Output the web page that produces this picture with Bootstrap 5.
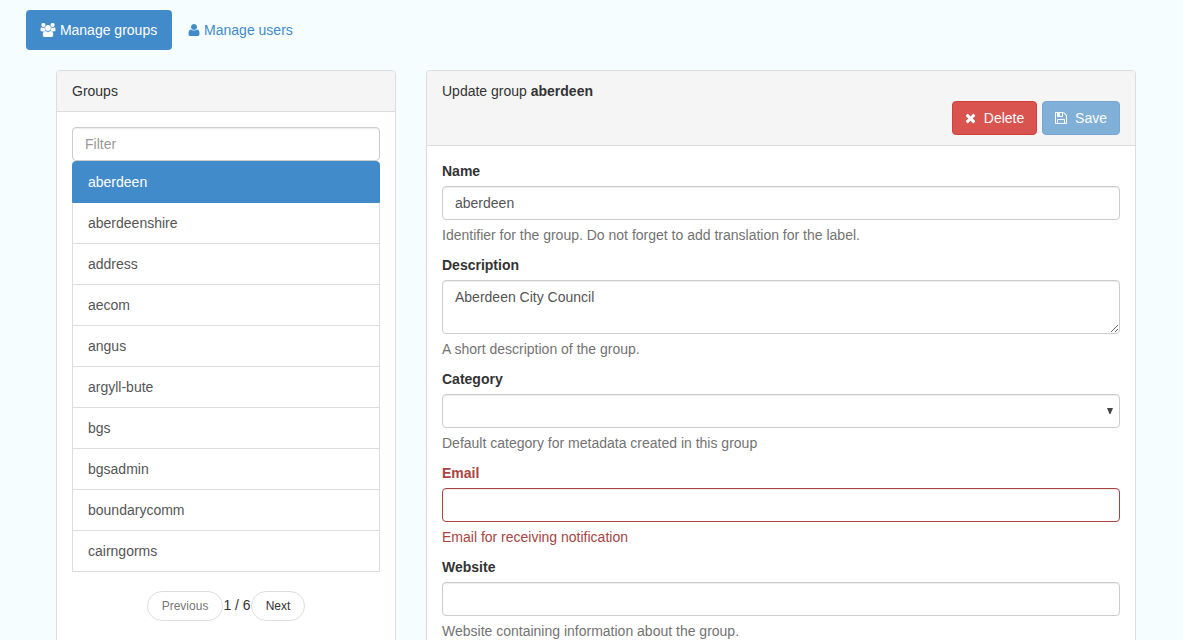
<!DOCTYPE html>
<html lang="en">
<head>
<meta charset="utf-8">
<meta name="viewport" content="width=device-width, initial-scale=1">
<title>Manage groups</title>
<link href="https://cdn.jsdelivr.net/npm/bootstrap@5.3.0/dist/css/bootstrap.min.css" rel="stylesheet">
<style>
  body { font: 14px/20px "Liberation Sans", Arial, sans-serif; color: #333; background: #f5fdff; }
  a { color: #428bca; }
  .admin-page { padding: 10px 32px 0 26px; }
  .nav-pills { gap: 2px; --bs-nav-pills-link-active-bg: #428bca; --bs-nav-pills-border-radius: 4px; --bs-nav-link-color: #428bca; margin-bottom: 20px; }
  .nav-pills .nav-link { padding: 10px 15px 10px 14px; font-size: 14px; border: 0; }
  .icon { height: 14px; fill: currentColor; vertical-align: -2px; }
  .panels { --bs-gutter-x: 30px; margin: 0 0 0 15px; }
  .card { --bs-card-border-color: #ddd; --bs-card-border-radius: 4px; --bs-card-inner-border-radius: 3px; --bs-card-color: #333; box-shadow: 0 1px 1px rgba(0,0,0,.05); }
  .card-header { padding: 10px 15px; background: #f5f5f5; border-color: #ddd; color: #333; }
  .card-body { padding: 15px; }
  .form-control, .form-select { font-size: 14px; line-height: 20px; padding: 6px 12px; border: 1px solid #ccc; border-radius: 4px; color: #555; background-color: #fff; box-shadow: inset 0 1px 1px rgba(0,0,0,.075); }
  .form-control { min-height: 34px; }
  .form-control::placeholder { color: #999; }
  textarea.form-control { display: block; height: 54px; min-height: 54px; }
  .form-select { height: 34px; background-image: url("data:image/svg+xml,%3Csvg xmlns='http://www.w3.org/2000/svg' viewBox='0 0 6 6'%3E%3Cpath fill='%23444' d='M0 0h6L3.5 6h-1z'/%3E%3C/svg%3E"); background-size: 6px 6px; background-position: right 6px center; }
  .form-label { display: block; font-weight: bold; margin-bottom: 5px; }
  .form-text { font-size: 14px; color: #737373; margin: 5px 0 10px; }
  .has-error .form-label, .has-error .form-text { color: #a94442; }
  .has-error .form-control { border-color: #a94442; }
  .list-group { --bs-list-group-border-color: #ddd; --bs-list-group-border-radius: 4px; --bs-list-group-item-padding-x: 15px; --bs-list-group-item-padding-y: 10px; --bs-list-group-color: #555; --bs-list-group-action-color: #555; --bs-list-group-active-bg: #428bca; --bs-list-group-active-border-color: #428bca; margin-bottom: 19px; }
  .list-group-item:last-child { border-radius: 0; }
  .pager-row { margin-bottom: 20px; }
  .actions { gap: 5px; }
  .btn { --bs-btn-font-size: 14px; --bs-btn-line-height: 20px; --bs-btn-padding-x: 12px; --bs-btn-padding-y: 6px; --bs-btn-border-radius: 4px; }
  .btn-danger { --bs-btn-bg: #d9534f; --bs-btn-border-color: #d43f3a; }
  .btn-primary { --bs-btn-disabled-bg: #428bca; --bs-btn-disabled-border-color: #357ebd; }
  .btn-pager { --bs-btn-font-size: 12px; --bs-btn-line-height: 18px; --bs-btn-padding-x: 14px; --bs-btn-padding-y: 5px; --bs-btn-border-radius: 15px; --bs-btn-bg: #fff; --bs-btn-border-color: #ddd; --bs-btn-color: #333; --bs-btn-disabled-color: #777; --bs-btn-disabled-bg: #fff; --bs-btn-disabled-border-color: #ddd; --bs-btn-disabled-opacity: 1; }
</style>
</head>
<body class="vh-100 overflow-hidden">
<div class="admin-page">
  <ul class="nav nav-pills">
    <li class="nav-item"><a class="nav-link active" href="#groups" aria-current="page"><svg class="icon" width="16" viewBox="0 0 16 14" aria-hidden="true"><circle cx="3.400" cy="2" r="2.100"/><circle cx="12.600" cy="2" r="2.100"/><circle cx="8" cy="4.900" r="2.900"/><path d="M1.600 4.200Q3.400 5.200 4.800 4.200Q4.400 6.200 5.600 7.600Q4.400 7.800 3.600 8.500H2Q.4 8.500.4 6.800Q.4 4.600 1.600 4.200zM14.400 4.200Q12.600 5.200 11.200 4.200Q11.600 6.200 10.400 7.600Q11.600 7.800 12.400 8.500H14Q15.600 8.500 15.600 6.800Q15.600 4.600 14.400 4.200zM5.200 8Q8 9.600 10.800 8Q13.300 8.300 13.300 12.200Q13.300 14 11.500 14H4.500Q2.700 14 2.700 12.200Q2.700 8.300 5.200 8z"/></svg> Manage groups</a></li>
    <li class="nav-item"><a class="nav-link" href="#users"><svg class="icon" width="12" viewBox="0 -128 1408 1792" aria-hidden="true"><path d="M1408 1277q0 120-73 189.5t-194 69.5h-874q-121 0-194-69.5t-73-189.5q0-53 3.5-103.5t14-109 26.5-108.5 43-97.5 62-81 85.5-53.5 111.5-20q9 0 42 21.5t74.500 48 108 48 133.500 21.500 133.500-21.500 108-48 74.500-48 42-21.500q61 0 111.500 20t85.500 53.500 62 81 43 97.500 26.500 108.500 14 109 3.500 103.500zm-320-893q0 159-112.500 271.500t-271.500 112.500-271.500-112.500-112.500-271.500 112.500-271.500 271.500-112.500 271.500 112.500 112.500 271.500z"/></svg> Manage users</a></li>
  </ul>

  <div class="row panels">
    <div class="col-4">
      <section class="card">
        <div class="card-header">Groups</div>
        <div class="card-body">
          <input type="text" class="form-control" placeholder="Filter" aria-label="Filter groups">
          <div class="list-group">
            <a href="#aberdeen" class="list-group-item list-group-item-action active" aria-current="true">aberdeen</a>
            <a href="#aberdeenshire" class="list-group-item list-group-item-action">aberdeenshire</a>
            <a href="#address" class="list-group-item list-group-item-action">address</a>
            <a href="#aecom" class="list-group-item list-group-item-action">aecom</a>
            <a href="#angus" class="list-group-item list-group-item-action">angus</a>
            <a href="#argyll-bute" class="list-group-item list-group-item-action">argyll-bute</a>
            <a href="#bgs" class="list-group-item list-group-item-action">bgs</a>
            <a href="#bgsadmin" class="list-group-item list-group-item-action">bgsadmin</a>
            <a href="#boundarycomm" class="list-group-item list-group-item-action">boundarycomm</a>
            <a href="#cairngorms" class="list-group-item list-group-item-action">cairngorms</a>
          </div>
          <div class="pager-row d-flex justify-content-center">
            <button type="button" class="btn btn-pager" disabled>Previous</button>
            <span class="pt-1">1 / 6</span>
            <button type="button" class="btn btn-pager">Next</button>
          </div>
        </div>
      </section>
    </div>

    <div class="col-8">
      <form class="card">
        <div class="card-header">
          <div>Update group <strong>aberdeen</strong></div>
          <div class="actions d-flex justify-content-end">
            <button type="button" class="btn btn-danger"><svg class="icon" width="11" viewBox="0 0 1408 1792" aria-hidden="true"><path d="M1298 1322q0 40-28 68l-136 136q-28 28-68 28t-68-28l-294-294-294 294q-28 28-68 28t-68-28l-136-136q-28-28-28-68t28-68l294-294-294-294q-28-28-28-68t28-68l136-136q28-28 68-28t68 28l294 294 294-294q28-28 68-28t68 28l136 136q28 28 28 68t-28 68l-294 294 294 294q28 28 28 68z"/></svg>&nbsp; Delete</button>
            <button type="button" class="btn btn-primary" disabled><svg class="icon" width="12" viewBox="0 0 1536 1792" aria-hidden="true"><path d="M384 1536h768v-384h-768v384zm896 0h128v-896q0-14-10-38.5t-20-34.5l-281-281q-10-10-34-20t-39-10v416q0 40-28 68t-68 28h-576q-40 0-68-28t-28-68v-416h-128v1280h128v-416q0-40 28-68t68-28h832q40 0 68 28t28 68v416zm-384-928v-320q0-13-9.5-22.5t-22.5-9.5h-192q-13 0-22.5 9.5t-9.5 22.5v320q0 13 9.5 22.5t22.5 9.5h192q13 0 22.5-9.5t9.5-22.5zm640 32v928q0 40-28 68t-68 28h-1344q-40 0-68-28t-28-68v-1344q0-40 28-68t68-28h928q40 0 88 20t76 48l280 280q28 28 48 76t20 88z"/></svg>&nbsp; Save</button>
          </div>
        </div>
        <div class="card-body">
          <label class="form-label" for="name">Name</label>
          <input type="text" class="form-control" id="name" value="aberdeen">
          <div class="form-text">Identifier for the group. Do not forget to add translation for the label.</div>

          <label class="form-label" for="description">Description</label>
          <textarea class="form-control" id="description" rows="2">Aberdeen City Council</textarea>
          <div class="form-text">A short description of the group.</div>

          <label class="form-label" for="category">Category</label>
          <select class="form-select" id="category"><option></option></select>
          <div class="form-text">Default category for metadata created in this group</div>

          <div class="has-error">
            <label class="form-label" for="email">Email</label>
            <input type="email" class="form-control" id="email">
            <div class="form-text">Email for receiving notification</div>
          </div>

          <label class="form-label" for="website">Website</label>
          <input type="url" class="form-control" id="website">
          <div class="form-text">Website containing information about the group.</div>
        </div>
      </form>
    </div>
  </div>
</div>
<script src="https://cdn.jsdelivr.net/npm/bootstrap@5.3.0/dist/js/bootstrap.bundle.min.js"></script>
</body>
</html>
